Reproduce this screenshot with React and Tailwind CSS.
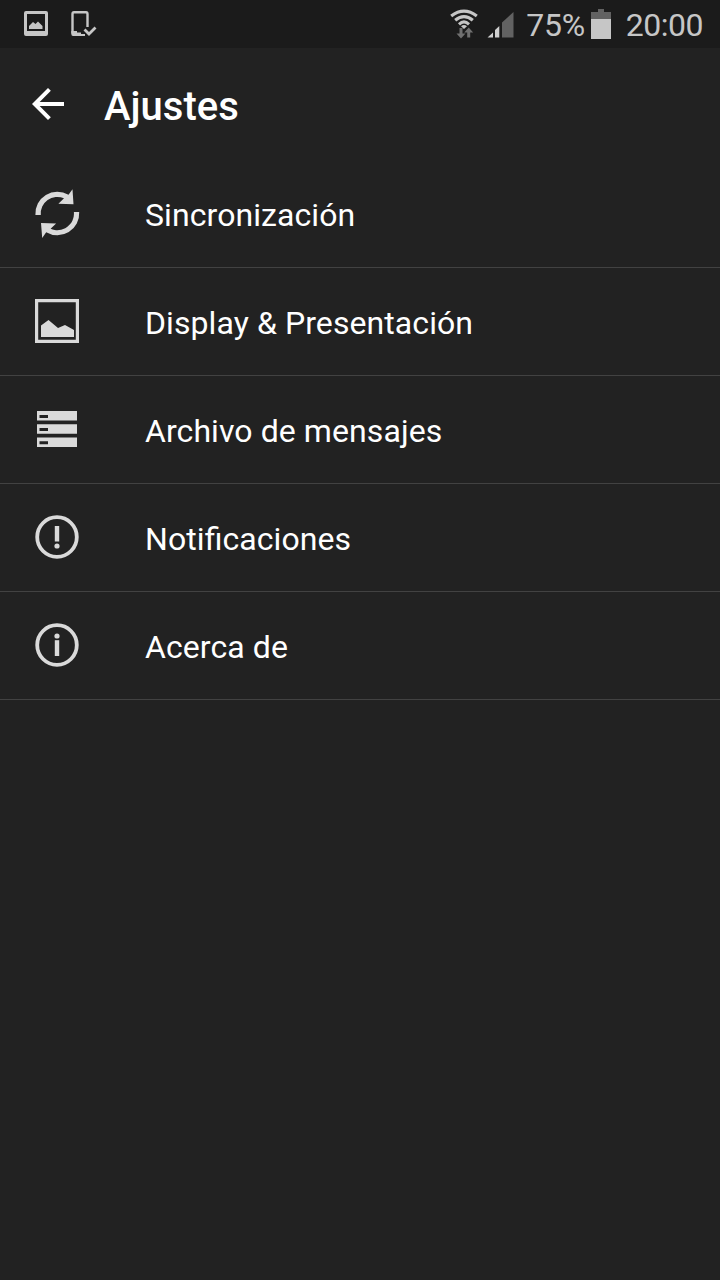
const items = [
  { label: 'Sincronización', icon: SyncIcon },
  { label: 'Display & Presentación', icon: DisplayIcon },
  { label: 'Archivo de mensajes', icon: StorageIcon },
  { label: 'Notificaciones', icon: AlertIcon },
  { label: 'Acerca de', icon: InfoIcon },
];

export default function App() {
  return (
    <div className="min-h-screen w-full bg-[#222222] text-white font-[Roboto,sans-serif]">
      <StatusBar />
      <header className="flex h-28 items-center pl-6">
        <button aria-label="Atrás">
          <svg viewBox="0 0 24 24" className="size-12" fill="currentColor">
            <path d="M20 11H7.83l5.59-5.59L12 4l-8 8 8 8 1.41-1.41L7.83 13H20z" />
          </svg>
        </button>
        <h1 className="ml-8 pt-1.5 text-[40px] leading-none font-medium">Ajustes</h1>
      </header>
      <ul>
        {items.map(({ label, icon: Icon }) => (
          <li key={label} className="flex h-27 items-center border-b border-[#424242] pb-px pl-[33px]">
            <Icon />
            <span className="ml-16 pt-1 text-[32px] leading-none tracking-[0.08px] [font-feature-settings:'liga'_1]">{label}</span>
          </li>
        ))}
      </ul>
    </div>
  );
}

function StatusBar() {
  return (
    <div className="flex h-12 items-center justify-between bg-[#1b1b1b] pr-[17px] pl-6 text-[#c6c6c6]">
      <div className="flex gap-5">
        <svg viewBox="0 0 26 26" className="size-[26px]" fill="currentColor">
          <path fillRule="evenodd" d="M2 0H22Q24 0 24 2V23Q24 25 22 25H2Q0 25 0 23V2Q0 0 2 0ZM3 3V20H21V3Z" />
          <path d="M5 18V15L9 11L11.5 13L14 10.5L18.5 15V18Z" />
        </svg>
        <svg viewBox="0 0 28 26" className="h-[26px] w-7" fill="none" stroke="currentColor">
          <path d="M17.5 16V3Q17.5 1.3 16 1.3H4Q2.5 1.3 2.5 3V22.5" strokeWidth="2.4" />
          <path d="M1.3 20H7V21.5H11V23H15V25H3Q1.3 25 1.3 23Z" fill="currentColor" stroke="none" />
          <path d="M14.5 18.5L19 23L25.5 16.5" strokeWidth="2.8" />
        </svg>
      </div>
      <div className="flex items-center">
        <svg viewBox="0 0 28 30" className="h-[30px] w-7" fill="none" stroke="currentColor">
          <path d="M1.2 7Q14 -2.6 26.8 7" strokeWidth="3.2" />
          <path d="M5.2 11.3Q14 4 22.8 11.3" strokeWidth="3.2" />
          <path d="M9 15.3Q14 10.6 19 15.3" strokeWidth="3" />
          <path d="M11 17.3Q14 14.8 17 17.3L14 20Z" fill="currentColor" stroke="none" />
          <path d="M9.5 19H12.5V24.5H15.5L11 29.5L6.5 24.5H9.5ZM17.2 28.5V23.5H14.2L18.7 18.5L23.2 23.5H20.2V28.5Z" fill="#707070" stroke="none" />
        </svg>
        <svg viewBox="0 0 27 27" className="ml-[9px] h-[27px] w-[27px]">
          <path d="M0.5 26.5L6 21.5V26.5ZM8 26.5V19L12.3 15V26.5Z" fill="#d0d0d0" />
          <path d="M15 26.5V11.5L26.5 1V26.5Z" fill="#626262" />
        </svg>
        <span className="ml-3 pt-0.5 text-[32px] leading-none tracking-[-0.25px]">75%</span>
        <svg viewBox="0 0 20 30" className="ml-1.5 h-[30px] w-5">
          <path d="M0 3H7V0H13V3H20V10H0Z" fill="#626262" />
          <path d="M0 10H20V30H0Z" fill="currentColor" />
        </svg>
        <span className="ml-[15px] pt-0.5 text-[32px] leading-none tracking-[-0.5px]">20:00</span>
      </div>
    </div>
  );
}

function SyncIcon() {
  return (
    <svg viewBox="0 0 48 48" className="size-12 overflow-visible" fill="#dadada">
      <path d="M2.4 26A21.9 21.9 0 0 1 35.5 5.8L39.5 .3L40.5 15.3L25.4 14.8L31 9.3A16.6 16.6 0 0 0 7.8 26Z" />
      <path d="M46.2 23A21.9 21.9 0 0 1 13.2 43.2L9.2 49L8 34L23.1 34.5L17.6 39.7A16.6 16.6 0 0 0 40.9 23Z" />
    </svg>
  );
}

function DisplayIcon() {
  return (
    <svg viewBox="0 0 48 48" className="size-12" fill="#dadada">
      <path fillRule="evenodd" d="M2 2H46V46H2ZM5.2 5.2V42.8H42.8V5.2Z" />
      <path d="M8 40V28.5L15.5 23L25 31L32 28L41 33V40Z" />
    </svg>
  );
}

function StorageIcon() {
  return (
    <svg viewBox="0 0 48 48" className="size-12" fill="#dadada">
      <path d="M4 6H44V15.5H4ZM4 19.2H44V28.8H4ZM4 32.5H44V42H4Z" />
      <path d="M6.5 10H15V13H6.5ZM6.5 23H15V26H6.5ZM6.5 36.3H15V39.3H6.5Z" fill="#222222" />
    </svg>
  );
}

function AlertIcon() {
  return (
    <svg viewBox="0 0 48 48" className="size-12" fill="#dadada">
      <circle cx="24" cy="24" r="19.8" fill="none" stroke="#dadada" strokeWidth="3.8" />
      <path d="M21.8 13H26.2V28.5H21.8Z" />
      <circle cx="24" cy="33" r="2.6" />
    </svg>
  );
}

function InfoIcon() {
  return (
    <svg viewBox="0 0 48 48" className="size-12" fill="#dadada">
      <circle cx="24" cy="24" r="19.8" fill="none" stroke="#dadada" strokeWidth="3.8" />
      <circle cx="24" cy="15" r="2.6" />
      <path d="M21.8 19.2H26.2V35H21.8Z" />
    </svg>
  );
}
